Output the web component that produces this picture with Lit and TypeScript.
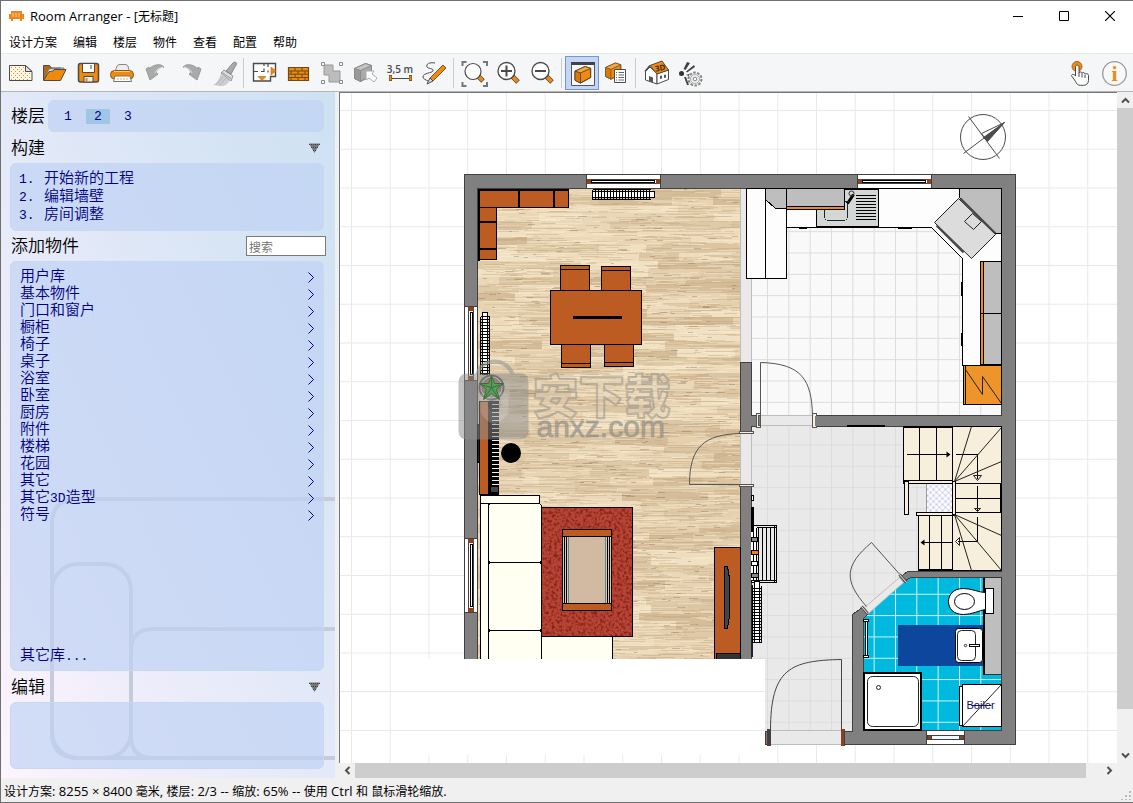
import { LitElement, html, svg, css } from "lit";
import { customElement, state } from "lit/decorators.js";

const MENUS = ["设计方案", "编辑", "楼层", "物件", "查看", "配置", "帮助"];
const STEPS = ["开始新的工程", "编辑墙壁", "房间调整"];
const CATEGORIES = ["用户库", "基本物件", "门口和窗户", "橱柜", "椅子", "桌子", "浴室", "卧室", "厨房", "附件", "楼梯", "花园", "其它", "其它3D造型", "符号"];

const ORANGE = "#f08a0c";
const INK = "#4a4a4a";

/* Latin runs get their own size next to the Chinese text. */
const mixed = (text: string) =>
  text.split(/([\x20-\x7e×]+)/).filter(Boolean).map((run) => (/^[\x20-\x7e×]/.test(run) ? html`<span class="latin">${run}</span>` : run));

const lens = (sign: unknown) => svg`
  <path d="M21 20l6 6" stroke="#4a4a4a" stroke-width="5"/>
  <path d="M22 21l4.500 4.500" stroke=${ORANGE} stroke-width="3.500"/>
  <circle cx="15.500" cy="15" r="8.500" fill="#fff" stroke=${INK} stroke-width="1.300"/>${sign}`;

const box3d = (c1: string, c2: string, c3: string, line: string) => svg`
  <path d="M0 5L11 0L17 2V12L6 18L0 15z" fill=${c1} stroke=${line} stroke-linejoin="round"/>
  <path d="M0 5L11 0L17 2L6 7z" fill=${c2}/><path d="M0 5L6 7V18L0 15z" fill=${c3}/>
  <path d="M0 5L6 7L17 2M6 7V18M0 5L11 0L17 2V12L6 18L0 15z" fill="none" stroke=${line} stroke-linejoin="round"/>`;

const ICONS: Record<string, unknown> = {
  new: svg`<path d="M6.500 9.500H22.500L29 15.500V24.500H6.500z" fill="#fff7ea" stroke=${INK}/>
    <g fill=${ORANGE} shape-rendering="crispEdges">${[11, 13, 15, 17, 19, 21, 23].map((y, i) => [8, 12, 16, 20, 24].map((x) => svg`<path d="M${x + (i % 2) * 2} ${y}h1v1h-1z"/>`))}</g>
    <path d="M22.500 9.500V15.500H29z" fill="#e4e4e4" stroke=${INK}/>`,
  open: svg`<path d="M6.500 24V9.500h6l2 2.500h10v4" fill="#b36a12" stroke=${INK}/>
    <path d="M8 21l4-8 15-1-2 6z" fill="#fff" stroke="#777"/>
    <path d="M6.500 24.500L12 15.500l4-.5 1-1.500h12L23.500 24.500z" fill=${ORANGE} stroke=${INK}/>`,
  save: svg`<rect x="7.500" y="7.500" width="20" height="18.500" rx="2" fill=${ORANGE} stroke=${INK} stroke-width="1.500"/>
    <path d="M11.500 7.500h12v9h-12z" fill="#fff" stroke=${INK}/><path d="M13 20.500h9V26h-9z" fill="#eee" stroke=${INK}/><path d="M14.500 22h2v4h-2z" fill="#e0870f"/><path d="M20 9v4" stroke=${INK}/>`,
  print: svg`<path d="M10 16l2-6 2-1.500h7l2 1.500 1.500 6z" fill="#eee" stroke="#888"/>
    <rect x="5.500" y="14.500" width="23" height="8.500" rx="4" fill=${ORANGE} stroke="#8a5a1c"/><path d="M9 15.500h16" stroke="#ffc36d"/>
    <path d="M10 20h15l1.500 5.500h-18z" fill="#fff" stroke="#777"/><path d="M12 23h12" stroke="#f5a94c" stroke-dasharray="2 1"/>`,
  undo: svg`<path d="M7 13l3-2v2c3-3 7-5 12-4l3 2c-4 0-7 2-8 6l2 1-8 6z" fill="#aaa" stroke="#999"/><path d="M16 17c1-3 4-5 8-6" fill="none" stroke="#e2e2e2"/>`,
  redo: svg`<path d="M28 13l-3-2v2c-3-3-7-5-12-4l-3 2c4 0 7 2 8 6l-2 1 8 6z" fill="#aaa" stroke="#999"/><path d="M19 17c-1-3-4-5-8-6" fill="none" stroke="#e2e2e2"/>`,
  brush: svg`<path d="M6 29c4-2 6-6 8-11l9 6c-2 4-5 6-8 6z" fill="#cecece"/><path d="M9 29l7-8M12 30l7-8" stroke="#b4b4b4"/>
    <path d="M14 17l3-3 9 6-2 5z" fill="#ddd" stroke="#999"/><path d="M15 16.500l9 6" stroke="#999"/><path d="M19 15l7-8c2-2 5 0 3 2l-5 9z" fill="#aaa" stroke="#888"/>`,
  plan: svg`<path d="M6.500 7.500h22v13h-5V25h-17z" fill="#fff" stroke=${INK} stroke-width="1.400"/>
    <path d="M6 15.500h5M14 15.500h3v-3M17 7v3M21 7v4M21 14.500v2" fill="none" stroke=${INK} stroke-width="1.200"/>
    <path d="M24 11l5 4-5 4z" fill=${ORANGE} stroke="#a86a1c" stroke-width=".6"/><path d="M11 20.500h8l-4 4z" fill=${ORANGE} stroke="#a86a1c" stroke-width=".6"/>`,
  bricks: svg`<path d="M7.500 11.500h20v13h-20z" fill=${ORANGE} stroke="#6b4a1c" stroke-width="1.200"/>
    <path d="M7 15h21M7 18.200h21M7 21.500h21M14 11v4M21 11v4M10 15v3M17 15v3M24 15v3M14 18v3M21 18v3M10 21.500v3M17 21.500v3M24 21.500v3" stroke="#6b4a1c"/>`,
  group: svg`<path d="M9 9h9v6h7v11H14v-7H9z" fill="#bdbdbd" stroke="#999"/>
    <g fill="#fff" stroke="#888"><path d="M6.500 6.500h3v3h-3zM24.500 6.500h3v3h-3zM6.500 24.500h3v3h-3zM24.500 24.500h3v3h-3z"/></g>`,
  pick: svg`<g transform="translate(5.500 7.500)">${box3d("#aaa", "#c4c4c4", "#999", "#8a8a8a")}</g><path d="M17 15l8 0 -2 3 5 4-3 4-5-4-3 2z" fill="#fff" stroke="#aaa"/>`,
  measure: svg`<text x="17" y="17" text-anchor="middle" font-family="Open Sans" font-size="10" font-weight="600" fill=${INK}>3,5 m</text>
    <path d="M8 22.500h19" stroke=${INK}/><path d="M7.500 19v6M27.500 19v6" stroke="#7a5320" stroke-width="3"/><path d="M7.500 20v4M27.500 20v4" stroke=${ORANGE} stroke-width="1.800"/>`,
  pencil: svg`<path d="M18 7c-6-1-9 1-8 4 1 2 7 1 6 4-1 2-10 2-10 6 0 2 3 3 5 4" fill="none" stroke=${INK}/>
    <path d="M13 22L26 9l3 3-13 13z" fill=${ORANGE} stroke="#7a5320"/><path d="M13 22l3 3-6 3z" fill="#ddd" stroke=${INK}/>`,
  fit: svg`<path d="M5.500 10V6h4M26 6h4v4M30 26v4h-4M9.500 30h-4v-4" fill="none" stroke="#777" stroke-width="2"/>
    <path d="M21 20l5 5" stroke="#4a4a4a" stroke-width="5"/><path d="M22 21l3.500 3.500" stroke=${ORANGE} stroke-width="3.500"/>
    <circle cx="16" cy="15.500" r="8" fill="#fff" stroke=${INK} stroke-width="1.200"/>`,
  zoomIn: lens(svg`<path d="M10 15h11M15.500 9.500v11" stroke=${INK} stroke-width="2"/>`),
  zoomOut: lens(svg`<path d="M10 15h11" stroke=${INK} stroke-width="2"/>`),
  view: svg`<path d="M6.500 7h23v22.500h-23z" fill="#f6f8fc" stroke="#555"/><path d="M6 6h24v3H6z" fill="#3c4250"/><g transform="translate(10 10.500) scale(.92)">${box3d("#f08a0c", "#f8a93e", "#d97a08", "#5a4526")}</g>`,
  list: svg`<g transform="translate(6.500 7) scale(.9)">${box3d("#f08a0c", "#f8a93e", "#d97a08", "#7a5a2a")}</g>
    <path d="M15.500 13.500h11v13h-11z" fill="#fff" stroke=${INK}/><path d="M17 16.500h1M17 19h1M17 21.500h1M17 24h1M19.500 16.500H25M19.500 19H25M19.500 21.500H25M19.500 24H25" stroke="#666"/>`,
  house: svg`<path d="M6.500 15.500L11 11l7 6.500V28L6.500 24z" fill="#fff" stroke=${INK}/><path d="M18 17.500L29.500 14v9.500L18 28z" fill="#fff" stroke=${INK}/>
    <path d="M11 9.500L23 5l6.500 9-11.500 4z" fill=${ORANGE} stroke=${INK}/><path d="M6 15.500L11 9.500" stroke=${INK} stroke-width="1.500"/>
    <path d="M10 20l4 1.500v5l-4-1.500zM21 20l2-.6v3l-2 .6zM25 19l2-.6v3l-2 .6z" fill="#555"/>
    <text x="16" y="15" font-family="Open Sans" font-weight="700" font-size="8" fill="#3b2c12" transform="rotate(-10 20 12)">3D</text>`,
  camera: svg`<circle cx="8.500" cy="17.500" r="2.500" fill="#333"/>
    <path d="M10.500 13l3.500-7 3 1-4.500 7zM13 15.500l8-6.500 1 2-8 5.500zM11 21l3 8h2l-3-8zM13 19l3 1v-2z" fill="#444"/>
    <circle cx="22" cy="23" r="6.500" fill="#f0f0f0" stroke="#888" stroke-width="2" stroke-dasharray="2.600 1.400"/><circle cx="22" cy="23" r="4.500" fill="#eee" stroke="#aaa"/><circle cx="22" cy="23" r="1.800" fill="#fff" stroke="#888"/>`,
  touch: svg`<circle cx="14" cy="10.500" r="5" fill=${ORANGE} stroke="#9a6a2a"/>
    <path d="M12.500 20V11c0-2.500 3.500-2.500 3.500 0v6c0-1.500 3-1.500 3 .5c0-1.500 3-1.200 3 .8c0-1 3.500-1 3.500 1v5c0 3-2 5-5 5h-3c-3 0-4-1.500-5-4l-4-5.500c0-2 3-1.500 4 0z" fill="#fff" stroke=${INK}/>
    <path d="M16 17v4M19 18v3.500M22 19v3" stroke=${INK}/>`,
  info: svg`<circle cx="17.500" cy="17.500" r="11.800" fill="#f8f8f8" stroke="#999" stroke-width="1.300"/>
    <text x="17.500" y="25" text-anchor="middle" font-family="Liberation Serif" font-weight="700" font-size="22" fill=${ORANGE}>i</text>`,
};

type Tool = [string, string];
const TOOL_GROUPS: Tool[][] = [
  [["new", "新建"], ["open", "打开"], ["save", "保存"], ["print", "打印"], ["undo", "撤销"], ["redo", "重做"], ["brush", "清除"]],
  [["plan", "房间"], ["bricks", "墙壁"], ["group", "组合"], ["pick", "选择"], ["measure", "测量"], ["pencil", "绘图"]],
  [["fit", "适合窗口"], ["zoomIn", "放大"], ["zoomOut", "缩小"]],
  [["view", "物件面板"], ["list", "物件清单"]],
  [["house", "3D"], ["camera", "渲染"]],
];

/* ---------- floor plan ---------- */
const WOOD = "#bc5c22";
const R = (x: number, y: number, x2: number, y2: number, fill = "none", stroke = "#000", w = 1) =>
  svg`<rect x=${x} y=${y} width=${x2 - x} height=${y2 - y} fill=${fill} stroke=${stroke} stroke-width=${w}></rect>`;
/* Fills without an outline start on the pixel edge, outlines on its centre. */
const F = (x: number, y: number, x2: number, y2: number, fill: string) => R(x - 0.5, y - 0.5, x2 - 0.5, y2 - 0.5, fill, "none");
const P = (d: string, fill = "none", stroke = "#000", w = 1) =>
  svg`<path d=${d} fill=${fill} stroke=${stroke} stroke-width=${w}></path>`;
const range = (a: number, b: number, step: number) => {
  const out: number[] = [];
  for (let v = a; v <= b; v += step) out.push(v);
  return out;
};

function woodFloor(x0: number, y0: number, x1: number, y1: number) {
  let seed = 20;
  const rnd = () => (seed = (seed * 16807) % 2147483647) / 2147483647;
  const planks = ["#ead7b8", "#e4d0ae", "#dcc5a2", "#f1e1c3", "#d5bd99", "#e8d4b3", "#dfcaa8", "#eedcbd"];
  const d: string[] = planks.map(() => "");
  const tones = ["#bd9f78", "#c9ae88", "#fff1d6", "#86705a"];
  const s: string[] = tones.map(() => "");
  for (let y = y0; y < y1; y += 8) {
    const h = Math.min(8, y1 - y);
    let x = x0 - Math.floor(rnd() * 50);
    while (x < x1) {
      const w = 35 + Math.floor(rnd() * 60);
      const a = Math.max(x, x0);
      const b = Math.min(x + w, x1);
      if (b > a) d[Math.floor(rnd() * planks.length)] += `M${a} ${y}H${b}V${y + h}H${a}z`;
      x += w;
    }
    for (let i = 0; i < 60; i++) {
      const r = rnd();
      const t = r < 0.27 ? 0 : r < 0.55 ? 1 : r < 0.9 ? 2 : 3;
      const a = x0 + Math.floor(rnd() * (x1 - x0 - 4));
      const w = t === 3 ? 3 + Math.floor(rnd() * 7) : 8 + Math.floor(rnd() * 32);
      const yy = y + Math.floor(rnd() * h);
      s[t] += `M${a} ${yy}H${Math.min(a + w, x1)}v1H${a}z`;
    }
  }
  return svg`${d.map((p, i) => svg`<path d=${p} fill=${planks[i]}></path>`)}
    ${s.map((p, i) => svg`<path d=${p} fill=${tones[i]} opacity=".38"></path>`)}`;
}

const hWindow = (x: number, x2: number, y: number) => svg`${R(x, y, x2, y + 14, "#fff", "#404040")}
  ${R(x, y + 5, x2, y + 9, "#fff", "#404040")}${R(x + 5, y + 6, x2 - 6, y + 8, "#fff", "#000")}
  ${F(x + 1, y + 5, x + 5, y + 10, "#8b4020")}${F(x2 - 4, y + 5, x2, y + 10, "#8b4020")}`;
const vWindow = (y: number, y2: number) => svg`${R(464, y, 477, y2, "#fff", "#404040")}
  ${R(468, y, 473, y2, "#fff", "#404040")}${R(470, y + 6, 472, y2 - 6, "#fff", "#000")}
  ${F(468, y + 1, 474, y + 5, "#8b4020")}${F(468, y2 - 4, 474, y2, "#8b4020")}`;
const chair = (x: number, y: number, y2: number, line: number) => svg`${R(x, y, x + 29, y2, WOOD)}${P(`M${x} ${line}h29`)}`;

const plan = svg`
  <g shape-rendering="crispEdges">
    ${F(740, 188, 852, 744, "#e9e9e9")}${F(852, 426, 1002, 620, "#e9e9e9")}
    <g transform="translate(-.5 -.5)">${woodFloor(478, 189, 740, 660)}</g>
    ${F(751, 188, 1002, 416, "#f9f9f9")}
    ${F(751, 426, 852, 730, "url(#tile)")}${F(852, 426, 1002, 620, "url(#tile)")}${F(751, 188, 1002, 416, "url(#tile)")}
    ${P("M740 188V660M751 188V362", "none", "#bdbdbd")}
    ${P("M863 614L910 577H1002V730H863z", "#00b9de", "none")}
    ${P("M863 614L910 577H1002V730H863z", "url(#tileWhite)", "none")}

    ${P("M464 660V174H1015V744H843V731H852V614L862 607L868 613L863 618V730H1001V577H910L902 582L899 577L907 571H1001V426H816V415H1001V188H477V660z", "#808080", "#404040")}
    ${P("M740 362H751V415H760V426H751V432H740z", "#808080", "#404040")}
    ${R(740, 486, 751, 662, "#808080", "#404040")}
    ${F(740, 433, 751, 486, "#e9e9e9")}${P("M740 433V486M751 433V486M760 415H814M760 425H814", "none", "#bdbdbd")}
    ${hWindow(586, 660, 174)}${hWindow(857, 931, 174)}${vWindow(306, 380)}${vWindow(538, 612)}
    ${R(926, 730, 964, 744, "#fff", "#404040")}${R(927, 735, 963, 739, "#8b4020", "#404040")}${R(931, 735, 959, 739, "#eefbff", "#404040")}

    ${R(479, 190, 568, 207, WOOD)}${R(479, 207, 496, 259, WOOD)}
    ${P("M478.500 260V189.500H568M518.500 190V207M553.500 190V207M479 221.500H496M479 248.500H496", "none", "#000", 2)}
    ${R(592, 191, 654, 197, "#fff")}${P("M592 189H650M592 199H650" + range(592, 650, 3).map((x) => `M${x} 189V199`).join(""))}
    ${R(482, 312, 487, 374, "#fff")}${P("M480 316V374M489 316V374" + range(316, 373, 3).map((y) => `M480 ${y}H489`).join(""))}

    ${chair(560, 265, 290, 269)}${chair(601, 266, 290, 270)}${chair(561, 344, 367, 363)}${chair(604, 344, 366, 362)}
    ${R(550, 290, 641, 344, WOOD)}${F(573, 316, 622, 319, "#000")}

    ${R(477, 424, 479, 462, "#222")}${R(479, 401, 488, 494, WOOD)}${R(488, 401, 498, 494, "#000")}${F(491, 487, 498, 492, "#444")}
    ${P(range(404, 486, 4).map((y) => `M491 ${y}H498`).join(""), "none", "#eee")}
    ${R(480, 503, 488, 662, "#fffff2")}${R(480, 495, 539, 503, "#fffff2")}
    ${R(541, 636, 612, 662, "#fffff2")}
    ${R(541, 507, 632, 636, "#b84434")}
    <rect x="541.500" y="507.500" width="90" height="128" filter="url(#pile)"></rect>
    <rect x="488" y="503" width="53" height="59" rx="3" fill="#fffff2" stroke="#000"></rect>
    <rect x="488" y="562" width="53" height="68" rx="3" fill="#fffff2" stroke="#000"></rect>
    <rect x="488" y="630" width="53" height="40" rx="3" fill="#fffff2" stroke="#000"></rect>
    ${R(562, 529, 611, 610, "#dcc8b8")}${F(568, 536, 605, 603, "#d2baa2")}
    ${P("M564 536V603M566 536V603M607 536V603M609 536V603")}${P("M568 536V603M605 536V603", "none", "#5d8287")}
    ${R(562, 529, 611, 536, WOOD)}${R(562, 603, 611, 610, WOOD)}
    ${R(714, 547, 740, 662, WOOD)}${R(716, 653, 740, 662, "#333")}${P("M724 566H727L729 578V616L727 628H724z", "#444")}

    ${P("M786 188H1001V365H962V258L931 227H786z", "#fdfdfd")}
    ${R(746, 188, 786, 278, "#fdfdfd")}${P("M765 188V278M798 228H806M897 228H911")}${P("M961 281V295M961 332V345", "none", "#000", 2)}
    ${R(816, 189, 878, 226, "#d3d7d6")}
    <rect x="824" y="200" width="23" height="20" rx="4" fill="none" stroke="#222"></rect>
    ${P(range(195, 221, 3).map((y) => `M855 ${y}H875`).join(""))}
    ${P("M765 188V199L775 208H786V188z", "#bebebe")}${R(786, 188, 844, 206, "#bebebe")}${R(786, 206, 844, 209, "#ec8c1a")}
    ${P("M959 188V197L995 233H1001V188z", "#bebebe")}
    ${R(983, 261, 1001, 364, "#bebebe")}${R(980, 261, 983, 364, "#ec8c1a")}${P("M980 313H1001")}
    ${R(963, 365, 1001, 404, "#ed942b")}${P("M965 365V404")}${F(847, 425, 885, 427, "#000")}

    ${R(903, 426, 1001, 482, "#f7eedb")}${R(952, 426, 1001, 570, "#f7eedb")}${R(918, 514, 952, 570, "#f7eedb")}
    ${P("M903 427H952M919 427V480M936 427V480M929 515V570M941 515V570M955 483H1001M955 498H1001M955 512H1001M918 569H952M906 454H947M955 454H977V478M977 485V510M977 516V541H957M922 542H951M1000 483V512")}
    ${R(926, 483, 952, 512, "#fff", "#999")}${F(927, 484, 952, 512, "url(#hatch)")}
    ${R(903, 480, 952, 483, "#f7eedb")}${R(904, 481, 908, 514, "#f7eedb")}${R(916, 512, 955, 515, "#f7eedb")}${R(952, 481, 955, 514, "#f7eedb")}

    ${R(751, 525, 776, 582, "#e9e9e9")}${P("M751 527H776M751 580H776" + range(758, 774, 4).map((x) => `M${x} 527V580`).join("") + "M774 525V582")}
    ${F(751, 527, 757, 580, "#fff")}${P("M753 527V580M756 527V580")}
    ${R(751, 537, 757, 541, "#888")}${R(751, 550, 758, 554, "#ff7f00")}${R(751, 561, 757, 565, "#fff")}${R(751, 573, 758, 577, "#888")}
    ${F(751, 507, 754, 532, "#000")}${R(751, 495, 753, 500, "#fff")}${F(751, 585, 753, 657, "#222")}
    ${R(754, 581, 759, 642, "#fff")}${P("M752 585V642M761 585V642" + range(588, 642, 3).map((y) => `M752 ${y}H761`).join(""))}

    ${R(984, 577, 1001, 674, "#bebebe", "#333")}${P("M983.500 577V674", "none", "#000", 2)}
    ${F(898, 625, 983, 666, "#0c479d")}
    ${R(985, 588, 993, 613, "#fff")}
    ${R(865, 620, 867, 656, "#fff")}${R(863, 619, 868, 621, "#fff")}${R(863, 655, 868, 657, "#fff")}
    ${R(863.5, 672.5, 920.5, 729.5, "#fff", "#000", 2)}
    ${R(959, 686, 962, 725, "#fff")}${R(962, 684, 1001, 726, "#fff")}

    ${F(765, 731, 842, 744, "#e9e9e9")}${P("M770 730H842M770 744H842", "none", "#bdbdbd")}
    ${R(765, 731, 769, 744, "#808080", "#404040")}${F(767, 729, 771, 746, "#5b3b2e")}${F(768, 731, 771, 744, "#404040")}${F(841, 729, 845, 746, "#8b4020")}${P("M844 730V745", "none", "#404040")}
    ${R(756, 413, 760, 427, "#f7eedb", "#555")}${R(758, 415, 760, 425, "#808080", "#555")}${R(812, 413, 816, 427, "#f7eedb", "#555")}${R(814, 415, 818, 425, "#808080", "none")}
    ${R(739, 431, 753, 433, "#f7eedb", "#555")}${R(739, 484, 753, 486, "#f7eedb", "#555")}
  </g>

  <rect x="867" y="676" width="51" height="50" rx="5" fill="#fff" stroke="#222"></rect><circle cx="878" cy="687" r="2" fill="#fff" stroke="#222"></circle>
  ${P("M985 592C978 592 972 588 963 588C952 588 948 595 948 601C948 608 953 614 963 614C972 614 978 610 985 609z", "#fff")}
  <ellipse cx="964" cy="601" rx="10" ry="8" fill="#fff" stroke="#000"></ellipse>
  <rect x="955" y="628" width="27" height="34" rx="3" fill="#fff" stroke="#000"></rect>
  <rect x="957" y="630" width="18" height="30" rx="4" fill="#fff" stroke="#222"></rect>
  <rect x="969" y="644" width="10" height="2" fill="#fff" stroke="#000"></rect><circle cx="965" cy="645" r="1.200" fill="#fff" stroke="#333"></circle>
  ${P("M962 726L1001 684M971 705H991", "none", "#222")}
  <text class="note" x="966" y="708.500">Boiler</text>

  ${P("M760 415V362C802 363 811 380 812 415", "none", "#555")}
  ${P("M740 484H689C689 446 704 434 740 433", "none", "#555")}
  ${P("M841 730V659C790 660 770 668 770 730", "none", "#444")}
  ${P("M864 607L899 577L903 582L868 613z", "#e9e9e9", "#bdbdbd")}
  ${P("M902 577L871 542C844 565 843 580 866 606", "none", "#555")}
  ${P("M861 606L867 613M899 574L906 582", "none", "#555", 3)}${P("M861 606L867 613M899 574L906 582", "none", "#f7eedb")}

  ${P("M958 198L995 234L971 258L934 222z", "#dcdcdc", "#222")}${P("M972 213L981 221L973 229L964 221z", "none", "#222")}
  ${P("M936 225L963 252M960 198L995 233", "none", "#444", 2)}
  ${P("M853 194L847 203", "none", "#000", 3)}<circle cx="851" cy="193" r="2.500" fill="none" stroke="#333"></circle>
  ${P("M965 369L982 394V376L1001 403", "none", "#222")}
  ${P("M954 481L971 426M954 481L1001 427M954 481L1001 461M954 514L1001 535M954 514L1001 570M954 514L971 570", "none", "#222")}
  ${P("M950 454l-4-3v6zM920 542l4-3v6z", "#000", "none")}${P("M973 475h8l-4 5zM959 537v8l-4-4zM974 508h6l-3 3z", "none", "#222")}

  <circle cx="510.500" cy="452.500" r="10"></circle>
  <circle cx="491" cy="387" r="12" fill="#d9d9d9" stroke="#555" stroke-width="2"></circle><circle cx="491" cy="387" r="9.500" fill="#c07040" stroke="#666"></circle>

  <g stroke="#4b4b4b" fill="none"><circle cx="982.500" cy="136.500" r="22.500"></circle>
    <path d="M968 116L999 158M963 153L1004 122L981 133L987 141"></path><path d="M1004 122L983 137L987 141z" fill="#4b4b4b"></path></g>

  <g opacity=".62">
    <path d="M477 374C478 366 486 361 494 361C503 361 510 367 512 374" fill="none" stroke="#999" stroke-width="4"></path>
    <rect x="458" y="373" width="70" height="66" rx="8" fill="#8d8d8d" opacity=".85"></rect>
    <path d="M480 394l13-5 15 5v15c0 7-8 12-14 15-7-3-14-8-14-15z" fill="#b5b5b5" opacity=".7"></path><circle cx="494" cy="404" r="7" fill="#8d8d8d" opacity=".7"></circle>
  </g>
  ${P("M491 375l3 8 9 0-7 6 3 10-8-6-8 6 3-10-7-6 9 0z", "#55a058", "#3d6b42")}
  ${P("M491 387V376M491 387L502 384M491 387L498 398M491 387L484 398M491 387L480 384", "none", "#3d6b42")}
  <text class="markHan" x="532" y="412">安下载</text>
  <text class="markUrl" x="536" y="436">anxz.com</text>

  ${F(391, 659, 765, 755, "#fff")}
  ${P("M340 691H764M340 730H764", "none", "#e9e9e9")}`;

@customElement("app-root")
export class AppRoot extends LitElement {
  @state() private floor = 2;

  static styles = css`
    :host { display: block; height: 100vh; font: 12px/20px "Open Sans", "Noto Sans CJK SC", sans-serif; color: #000; }
    * { box-sizing: border-box; }
    button { font: inherit; color: inherit; background: none; border: 0; padding: 0; margin: 0; }
    a { color: inherit; text-decoration: none; }
    ul, ol { list-style: none; margin: 0; padding: 0; }
    svg { display: block; }
    .latin { font-size: 13px; }
    .window { display: flex; flex-direction: column; height: 100%; background: #f0f0f0; border: 1px solid #6f6f6f; border-right-width: 0; }
    .title { display: flex; align-items: center; height: 30px; background: #fff; }
    .title h1 { flex: 1; margin: 0 0 0 6px; font-size: 12px; font-weight: 400; line-height: 20px; }
    .logo { margin-left: 8px; }
    .ctl { width: 46px; height: 29px; display: grid; place-items: center; }
    .menu { display: flex; height: 22px; align-items: center; background: #fff; padding: 2px 0 0 2px; }
    .menu button { padding: 0 6px; line-height: 20px; margin-right: 4px; }
    .tools { display: flex; align-items: center; height: 39px; padding: 1px 2px 0 2px; background: #f5f6f7; border-top: 1px solid #e9e9e9; border-bottom: 1px solid #b4b4b4; }
    .tools button { width: 34px; height: 34px; }
    .tools .on { background: #c6d6f2; box-shadow: inset 0 0 0 1px #7096dc; }
    .sep { width: 1px; height: 30px; background: #ccc; margin: 0 3px 0 2px; }
    .grow { flex: 1; }
    .main { flex: 1; min-height: 0; display: flex; }

    .side { position: relative; flex: none; width: 334px; display: flex; flex-direction: column; padding: 8px 11px 9px 9px;
      font: 350 15px/17px "Liberation Mono", "Noto Sans CJK SC", monospace; color: #000084;
      background: linear-gradient(to top right, #fdf4fe 0%, #f1eefb 22%, #e3e9f8 50%, #d8e5f5 72%, #cde1f2 100%); }
    .deco { position: absolute; left: 0; bottom: 0; }
    .side > :not(.deco) { position: relative; }
    .card { background: rgba(190, 210, 243, 0.68); border: 1px solid #c6d8f2; border-radius: 6px; }
    .side h2 { margin: 0 0 2px 1px; font: 350 17px/20px "Noto Sans CJK SC", sans-serif; color: #000; }
    .floors { display: flex; align-items: center; height: 32px; }
    .floors .card { flex: 1; align-self: stretch; display: flex; align-items: center; margin-left: 3px; padding-left: 7px; gap: 6px; }
    .floors button { width: 24px; height: 15px; line-height: 15px; text-align: center; }
    .floors .cur { background: #a0c6e6; }
    .head { display: flex; align-items: center; justify-content: space-between; height: 31px; padding-right: 4px; }
    .head.find { height: 30px; padding-right: 0; margin-right: -2px; }
    .steps { height: 68px; padding: 7px 8px; line-height: 18px; }
    .steps li { display: flex; }
    .steps .num { width: 25px; }
    .head input { width: 80px; height: 20px; border: 1px solid #7a7a7a; background: #fff; padding: 0 2px; font: 350 12px/16px "Noto Sans CJK SC", sans-serif; border-radius: 0; }
    .head input::placeholder { color: #6d6d6d; opacity: 1; }
    .lib { flex: 1; display: flex; flex-direction: column; justify-content: space-between; padding: 7px 9px 5px; }
    .lib li a { display: flex; justify-content: space-between; align-items: center; height: 17px; }
    .edit { height: 67px; }

    .view { flex: 1; min-width: 0; margin-left: 4px; display: grid; grid-template: 1fr 15px / 1fr 16px; }
    .canvas { min-width: 0; min-height: 0; overflow: hidden; background: #fff; border: 1px solid #777; border-width: 1px 0 0 1px; }
    .canvas svg { width: 100%; height: 100%; }
    .bar { display: flex; align-items: center; }
    .bar.v { flex-direction: column; }
    .bar button { flex: none; width: 16px; height: 16px; display: grid; place-items: center; }
    .track { flex: 1; align-self: stretch; display: flex; }
    .v .track { flex-direction: column; }
    .thumb { background: #cdcdcd; flex: none; }
    .v .thumb { height: 94%; }
    .bar:not(.v) .thumb { width: 98%; }
    .status { display: flex; align-items: center; justify-content: space-between; height: 24px; padding: 2px 0 0 3px; }
    .note { font: 11px "Liberation Sans", sans-serif; fill: #10106e; }
    .markHan { font: 900 46px "Noto Sans CJK SC", sans-serif; fill: #e4d5ba; fill-opacity: 0.35; stroke: #9c968c; stroke-opacity: 0.6; stroke-width: 2; stroke-linejoin: round; }
    .markUrl { font: 30px "Liberation Sans", sans-serif; fill: #8f8c87; fill-opacity: 0.65; stroke: #8f8c87; stroke-opacity: 0.5; }
  `;

  private chevron(d: string) {
    return html`<svg width="9" height="9" viewBox="0 0 9 9" fill="none" stroke="#505050" stroke-width="2"><path d=${d}></path></svg>`;
  }

  private tool([id, label]: Tool) {
    return html`<button class=${id === "view" ? "on" : ""} title=${label} aria-label=${label}><svg width="34" height="34" viewBox="0 0 34 34" fill="none">${ICONS[id]}</svg></button>`;
  }

  private fold() {
    return html`<svg width="11" height="10" viewBox="0 0 11 10"><path d="M0 .5H11L5.500 10z" fill="#777"></path><path d="M0 1.500H11M2 4.500H9M4 7.500H7" stroke="#444" stroke-dasharray="1 1"></path></svg>`;
  }

  render() {
    return html`<div class="window">
      <header class="title">
        <svg class="logo" width="15" height="12" viewBox="0 0 15 12"><path d="M2 1h11v3h2v5h-2v2h-2V9H4v2H2V9H0V4h2z" fill="#f0841a"></path><path d="M3 4h9M3 6h9" stroke="#ffd9a8" stroke-dasharray="2 1"></path></svg>
        <h1>${mixed("Room Arranger - [无标题]")}</h1>
        <button class="ctl" aria-label="最小化"><svg width="10" height="10"><path d="M0 5.500h10" stroke="#000"></path></svg></button>
        <button class="ctl" aria-label="最大化"><svg width="10" height="10"><path d="M.5.5h9v9h-9z" fill="none" stroke="#000"></path></svg></button>
        <button class="ctl" aria-label="关闭"><svg width="10" height="10"><path d="M0 0l10 10M10 0L0 10" stroke="#000" stroke-width="1.200"></path></svg></button>
      </header>
      <nav class="menu">${MENUS.map((m) => html`<button>${m}</button>`)}</nav>
      <div class="tools">
        ${TOOL_GROUPS.map((g, i) => html`${i ? html`<span class="sep"></span>` : ""}${g.map((t) => this.tool(t))}`)}
        <span class="grow"></span>${this.tool(["touch", "触控"])}${this.tool(["info", "信息"])}
      </div>
      <div class="main">
        <aside class="side">
          <svg class="deco" width="334" height="284" viewBox="0 0 334 284" fill="none" stroke="#c6cad9" stroke-width="4">
            <path d="M334 5H76Q51 5 51 30V238Q51 264 77 264H334"></path>
            <rect x="51" y="70" width="79" height="194" rx="26"></rect>
            <path d="M334 135H152Q130 135 130 157V242Q130 264 152 264"></path>
          </svg>
          <div class="floors"><h2>楼层</h2><div class="card">
            ${[1, 2, 3].map((n) => html`<button class=${n === this.floor ? "cur" : ""} @click=${() => (this.floor = n)}>${mixed(String(n))}</button>`)}
          </div></div>
          <div class="head"><h2>构建</h2>${this.fold()}</div>
          <ol class="card steps">${STEPS.map((s, i) => html`<li><span class="num">${mixed(`${i + 1}.`)}</span><a href="#">${s}</a></li>`)}</ol>
          <div class="head find"><h2>添加物件</h2><input type="text" placeholder="搜索" aria-label="搜索" /></div>
          <div class="card lib">
            <ul>${CATEGORIES.map((c) => html`<li><a href="#"><span>${mixed(c)}</span><svg width="6" height="11" fill="none" stroke="#00008b"><path d="M.5.5l5 5-5 5"></path></svg></a></li>`)}</ul>
            <a href="#">${mixed("其它库...")}</a>
          </div>
          <div class="head"><h2>编辑</h2>${this.fold()}</div>
          <div class="card edit"></div>
        </aside>
        <section class="view">
          <div class="canvas">
            <svg role="img" aria-label="平面图">
              <defs>
                <pattern id="grid" x="11" y="17" width="38.750" height="38.750" patternUnits="userSpaceOnUse"><path d="M.5 0V39M0 .5H39" stroke="#e9e9e9"></path></pattern>
                <pattern id="tile" x="766.500" y="252" width="21.330" height="21.330" patternUnits="userSpaceOnUse"><path d="M.5 0V22M0 .5H22" stroke="#dcdcdc"></path></pattern>
                <pattern id="tileWhite" x="766.500" y="252" width="21.330" height="21.330" patternUnits="userSpaceOnUse"><path d="M.5 0V22M0 .5H22" stroke="#d5f2f8"></path></pattern>
                <pattern id="hatch" width="6" height="6" patternUnits="userSpaceOnUse"><path d="M0 0L6 6M6 0L0 6" stroke="#c9c9f2"></path></pattern>
                <filter id="pile" x="0" y="0" width="1" height="1" color-interpolation-filters="sRGB"><feTurbulence type="fractalNoise" baseFrequency=".35" numOctaves="2" seed="3"></feTurbulence><feColorMatrix values="0 0 0 0 .5  0 0 0 0 .13  0 0 0 0 .1  3 0 0 0 -1.300"></feColorMatrix></filter>
              </defs>
              <rect width="100%" height="100%" fill="url(#grid)"></rect>
              <g transform="translate(-339.500 -92.500)">${plan}</g>
            </svg>
          </div>
          <div class="bar v"><button aria-label="向上">${this.chevron("M1 6.500L4.500 3 8 6.500")}</button><div class="track"><div class="thumb"></div></div><button aria-label="向下">${this.chevron("M1 2.500L4.500 6 8 2.500")}</button></div>
          <div class="bar"><button aria-label="向左">${this.chevron("M6.500 1L3 4.500 6.500 8")}</button><div class="track"><div class="thumb"></div></div><button aria-label="向右">${this.chevron("M2.500 1L6 4.500 2.500 8")}</button></div>
        </section>
      </div>
      <footer class="status"><span>${mixed("设计方案: 8255 × 8400 毫米, 楼层: 2/3 -- 缩放: 65% -- 使用 Ctrl 和 鼠标滑轮缩放.")}</span>
        <svg width="12" height="18"><path d="M8 9h2v2H8zM8 13h2v2H8zM4 13h2v2H4zM8 17h2v1H8zM4 17h2v1H4zM0 17h2v1H0z" fill="#bbb"></path></svg></footer>
    </div>`;
  }
}
